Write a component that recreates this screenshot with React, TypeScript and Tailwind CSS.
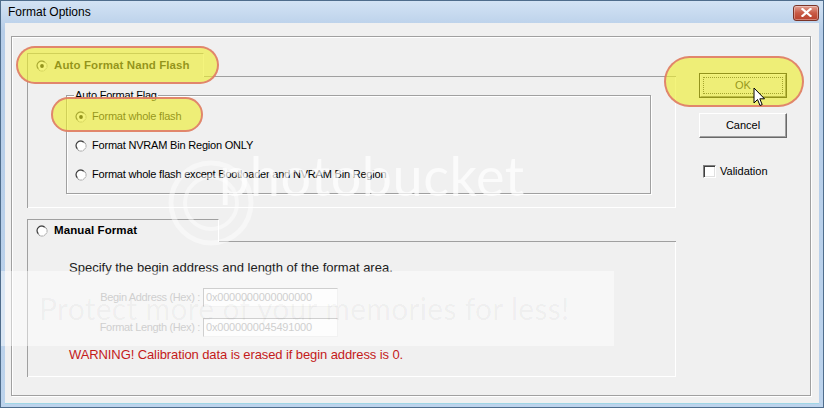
import React from "react";

function Radio({ checked }: { checked?: boolean }) {
  return (
    <svg width="12" height="12" viewBox="0 0 12 12" className="shrink-0">
      <circle cx="6" cy="6" r="5" fill="#ffffff" stroke="#8a8a8a" strokeWidth="1" />
      <path d="M2.4 8.6 A4.3 4.3 0 0 1 8.6 2.4" stroke="#3a3a3a" strokeWidth="1.1" fill="none" />
      <path d="M10.6 4.2 A5 5 0 0 1 4.2 10.6" stroke="#e4e4e4" strokeWidth="1" fill="none" />
      {checked && <circle cx="6" cy="6" r="1.9" fill="#000000" />}
    </svg>
  );
}

function Checkbox() {
  return (
    <div className="w-[13px] h-[13px] shrink-0 bg-white border-t border-l border-t-[#808080] border-l-[#808080] border-r border-b border-r-white border-b-white shadow-[inset_1px_1px_0_#404040,inset_-1px_-1px_0_#e0e0e0]" />
  );
}

function Etched({ className, children }: { className?: string; children?: React.ReactNode }) {
  return (
    <div className={"relative border border-[#a0a0a0] shadow-[inset_1px_1px_0_#ffffff,1px_1px_0_#ffffff] " + (className ?? "")}>
      {children}
    </div>
  );
}

export default function App() {
  return (
    <div className="relative w-[824px] h-[408px] overflow-hidden flex flex-col border border-[#4f6d8c] bg-[linear-gradient(#d3e3f4,#b6cde8_30px,#bcd3ec)] font-['Liberation_Sans',Arial,sans-serif] text-[11px] text-black">
      {/* Title bar */}
      <div className="h-[22px] flex items-center justify-between pl-[7px] pr-[4px] shrink-0">
        <span className="text-[12px] text-black leading-none">Format Options</span>
        <div className="w-[26px] h-[16px] mt-[1px] rounded-[3px] border border-[#7a3428] bg-[linear-gradient(#e2a194,#c95a45_50%,#b8402c)] flex items-center justify-center shadow-[inset_0_0_0_1px_rgba(255,255,255,0.35)]">
          <svg width="11" height="9" viewBox="0 0 11 9">
            <path d="M1.5 1 L9.5 8 M9.5 1 L1.5 8" stroke="#ffffff" strokeWidth="2.2" strokeLinecap="square" />
          </svg>
        </div>
      </div>

      {/* Client area */}
      <div className="flex-1 mx-[4px] mb-[4px] bg-[#f0f0f0] shadow-[0_1px_0_#9fd6e6]">
        <Etched className="ml-[6px] mt-[13px] w-[800px] h-[360px]">
          <div className="flex pl-[15px] pt-[16px]">
            {/* Left column */}
            <div className="w-[649px] flex flex-col">
              {/* Auto Format Nand Flash section */}
              <div className="flex flex-col border-l border-[#a0a0a0]">
                <div className="flex h-[24px]">
                  <div className="w-[176px] border-t border-t-[#a0a0a0] border-r border-r-white flex items-center pl-[8px] gap-[6px]">
                    <Radio checked />
                    <span className="font-bold text-[11.5px] tracking-[0.1px]">Auto Format Nand Flash</span>
                  </div>
                  <div className="flex-1 border-b border-[#a0a0a0]" />
                </div>
                <div className="h-[131px] border-r border-b border-white pt-[18px] pl-[38px]">
                  <Etched className="w-[585px] h-[99px]">
                    <span className="absolute -top-[7px] left-[7px] bg-[#f0f0f0] px-[1px] leading-[13px] tracking-[-0.2px]">Auto Format Flag</span>
                    <div className="flex flex-col pt-[6px] pl-[8px] tracking-[-0.2px]">
                      <div className="h-[29px] flex items-center gap-[5px]">
                        <Radio checked />
                        <span>Format whole flash</span>
                      </div>
                      <div className="h-[29px] flex items-center gap-[5px]">
                        <Radio />
                        <span>Format NVRAM Bin Region ONLY</span>
                      </div>
                      <div className="h-[29px] flex items-center gap-[5px]">
                        <Radio />
                        <span>Format whole flash except Bootloader and NVRAM Bin Region</span>
                      </div>
                    </div>
                  </Etched>
                </div>
              </div>

              {/* Manual Format section */}
              <div className="mt-[11px] flex flex-col border-l border-[#a0a0a0]">
                <div className="flex h-[23px]">
                  <div className="w-[191px] border-t border-t-[#a0a0a0] border-r border-r-white flex items-center pl-[8px] gap-[6px]">
                    <Radio />
                    <span className="font-bold text-[11.5px] tracking-[0.1px]">Manual Format</span>
                  </div>
                  <div className="flex-1 border-b border-[#a0a0a0]" />
                </div>
                <div className="h-[135px] border-r border-b border-white pl-[41px] pt-[18px] flex flex-col">
                  <div className="text-[13px] leading-[16px] text-[#202020]">Specify the begin address and length of the format area.</div>
                  <div className="mt-[12px] flex items-center">
                    <span className="w-[134px] pr-[3px] text-right text-[#a8a8a8] tracking-[-0.35px]">Begin Address (Hex) :</span>
                    <div className="w-[135px] h-[19px] bg-[#fbfbfb] border-t border-l border-[#a8a8a8] border-r border-b border-r-[#e8e8e8] border-b-[#e8e8e8] flex items-center pl-[2px] text-[#a8a8a8] tracking-[-0.2px]">0x0000000000000000</div>
                  </div>
                  <div className="mt-[11px] flex items-center">
                    <span className="w-[134px] pr-[3px] text-right text-[#a8a8a8] tracking-[-0.35px]">Format Length (Hex) :</span>
                    <div className="w-[135px] h-[19px] bg-[#fbfbfb] border-t border-l border-[#a8a8a8] border-r border-b border-r-[#e8e8e8] border-b-[#e8e8e8] flex items-center pl-[2px] text-[#a8a8a8] tracking-[-0.2px]">0x0000000045491000</div>
                  </div>
                  <div className="mt-[10px] text-[13px] leading-[16px] text-[#c41a1a] tracking-[-0.1px]">WARNING! Calibration data is erased if begin address is 0.</div>
                </div>
              </div>
            </div>

            {/* Right column */}
            <div className="ml-[23px] flex flex-col">
              <div className="mt-[20px] w-[88px] h-[25px] border border-black bg-[#f0f0f0]">
                <div className="w-full h-full border border-t-white border-l-white border-r-[#696969] border-b-[#696969] p-[2px]">
                  <div className="w-full h-full border border-dotted border-[#303030] flex items-center justify-center">OK</div>
                </div>
              </div>
              <div className="mt-[15px] w-[88px] h-[25px] bg-[#f0f0f0] border border-t-white border-l-white border-r-[#696969] border-b-[#696969] shadow-[inset_-1px_-1px_0_#a0a0a0] flex items-center justify-center">
                Cancel
              </div>
              <div className="mt-[27px] pl-[4px] flex items-center gap-[4px] h-[13px]">
                <Checkbox />
                <span>Validation</span>
              </div>
            </div>
          </div>
        </Etched>
      </div>

      {/* Photobucket watermark */}
      <div className="absolute left-[150px] top-[140px] pointer-events-none">
        <svg width="130" height="110" viewBox="0 0 130 110">
          <circle cx="60" cy="62" r="40" fill="none" stroke="rgba(255,255,255,0.45)" strokeWidth="5" />
          <circle cx="60" cy="62" r="26" fill="none" stroke="rgba(255,255,255,0.45)" strokeWidth="4" />
        </svg>
      </div>
      <div className="absolute left-[218px] top-[140px] text-[54px] leading-[70px] font-['Lato',sans-serif] text-white/70 pointer-events-none tracking-[0.5px]">
        photobucket
      </div>
      <div className="absolute left-0 top-[270px] w-[613px] h-[75px] bg-white/45 pointer-events-none flex items-center pl-[38px]">
        <span className="text-[30px] font-['Lato',sans-serif] text-black/[0.045] tracking-[0.3px]">Protect more of your memories for less!</span>
      </div>

      {/* Highlight annotations */}
      <div className="absolute left-[15px] top-[45px] w-[203px] h-[38px] rounded-full bg-[rgba(238,238,45,0.62)] border-2 border-[rgba(222,115,105,0.85)] pointer-events-none" />
      <div className="absolute left-[50px] top-[96px] w-[152px] h-[35px] rounded-full bg-[rgba(238,238,45,0.62)] border-2 border-[rgba(222,115,105,0.85)] pointer-events-none" />
      <div className="absolute left-[663px] top-[55px] w-[140px] h-[51px] rounded-full bg-[rgba(238,238,45,0.62)] border-2 border-[rgba(222,115,105,0.85)] pointer-events-none" />

      {/* Mouse cursor */}
      <svg className="absolute left-[752px] top-[86px] pointer-events-none" width="13" height="21" viewBox="0 0 13 21">
        <path d="M1 1 L1 16 L4.5 12.5 L7 18.5 L9.2 17.6 L6.8 11.8 L11.5 11.8 Z" fill="#ffffff" stroke="#000000" strokeWidth="1" strokeLinejoin="miter" />
      </svg>
    </div>
  );
}
